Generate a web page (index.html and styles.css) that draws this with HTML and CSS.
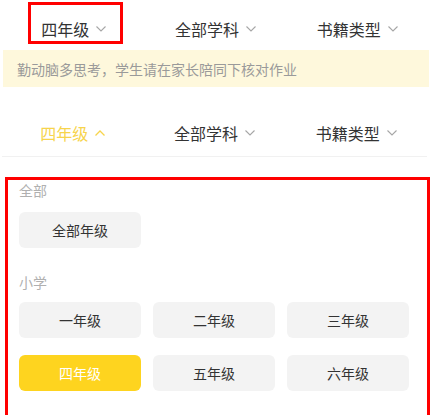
FILE: index.html
```html
<!DOCTYPE html>
<html lang="zh">
<head>
    <meta charset="UTF-8">
    <meta name="viewport" content="width=device-width, initial-scale=1.0">
    <title>年级筛选</title>
    <link rel="stylesheet" href="styles.css">
</head>
<body>
    <!-- closed state -->
    <div class="tabs tabs_top">
        <div class="tab">四年级
            <svg class="arrow" width="10" height="6" viewBox="0 0 10 6"><polyline points="0.5,0.5 5,5 9.5,0.5" fill="none" stroke="#a6a6a6" stroke-width="1.1"/></svg>
        </div>
        <div class="tab">全部学科
            <svg class="arrow" width="10" height="6" viewBox="0 0 10 6"><polyline points="0.5,0.5 5,5 9.5,0.5" fill="none" stroke="#a6a6a6" stroke-width="1.1"/></svg>
        </div>
        <div class="tab">书籍类型
            <svg class="arrow" width="10" height="6" viewBox="0 0 10 6"><polyline points="0.5,0.5 5,5 9.5,0.5" fill="none" stroke="#a6a6a6" stroke-width="1.1"/></svg>
        </div>
        <div class="mark mark_tab"></div>
    </div>
    <div class="notice">勤动脑多思考，学生请在家长陪同下核对作业</div>

    <!-- open state -->
    <div class="tabs tabs_open">
        <div class="tab tab_active">四年级
            <svg class="arrow" width="10" height="6" viewBox="0 0 10 6"><polyline points="0.5,5.5 5,1 9.5,5.5" fill="none" stroke="#f7d44c" stroke-width="1.3"/></svg>
        </div>
        <div class="tab">全部学科
            <svg class="arrow" width="10" height="6" viewBox="0 0 10 6"><polyline points="0.5,0.5 5,5 9.5,0.5" fill="none" stroke="#a6a6a6" stroke-width="1.1"/></svg>
        </div>
        <div class="tab">书籍类型
            <svg class="arrow" width="10" height="6" viewBox="0 0 10 6"><polyline points="0.5,0.5 5,5 9.5,0.5" fill="none" stroke="#a6a6a6" stroke-width="1.1"/></svg>
        </div>
    </div>

    <div class="panel">
        <div class="group_title">全部</div>
        <div class="grades grades_first">
            <div class="grade">全部年级</div>
        </div>
        <div class="group_title group_gap">小学</div>
        <div class="grades">
            <div class="grade">一年级</div>
            <div class="grade">二年级</div>
            <div class="grade">三年级</div>
            <div class="grade grade_on">四年级</div>
            <div class="grade">五年级</div>
            <div class="grade">六年级</div>
        </div>
    </div>
</body>
</html>
```

FILE: styles.css
```css
* {
  box-sizing: border-box;
  font-family: "Noto Sans CJK SC", "Noto Sans", sans-serif;
}
body {
  margin: 0;
  background: #fff;
  overflow: hidden;
}
.tabs {
  display: flex;
  align-items: center;
  position: relative;
}
.tabs_top {
  height: 50px;
  margin: 0 3px;
  padding-top: 7px;
}
.tabs_open {
  height: 50px;
  margin: 20px 4px 0 2px;
  padding-top: 2px;
  border-bottom: 1px solid #f1f1f1;
}
.tab {
  flex: 1;
  display: flex;
  justify-content: center;
  align-items: center;
  gap: 7px;
  font-size: 16px;
  color: #333;
}
.tab_active {
  color: #f7d44c;
}
.arrow {
  display: block;
}
.mark {
  position: absolute;
  border: 3px solid #ff0000;
}
.mark_tab {
  left: 25px;
  top: 2px;
  width: 95px;
  height: 42px;
}
.notice {
  height: 37px;
  margin: 0 2px 0 3px;
  padding-left: 14px;
  display: flex;
  align-items: center;
  background: #fef8dc;
  color: #9a9a9a;
  font-size: 14px;
}
.panel {
  margin: 20px 1px 0 5px;
  border: 3px solid #ff0000;
  padding: 0 11px 60px;
}
.group_title {
  font-size: 14px;
  line-height: 20px;
  color: #b0b0b0;
}
.group_gap {
  margin-top: 24px;
}
.grades {
  display: grid;
  grid-template-columns: repeat(3, 122px);
  column-gap: 12px;
  row-gap: 17px;
  margin-top: 10px;
}
.grades_first {
  margin-top: 12px;
}
.grade {
  height: 36px;
  border-radius: 6px;
  background: #f3f3f3;
  display: flex;
  justify-content: center;
  align-items: center;
  font-size: 14px;
  color: #333;
}
.grade_on {
  background: #fed41f;
  color: #fff;
}
```
